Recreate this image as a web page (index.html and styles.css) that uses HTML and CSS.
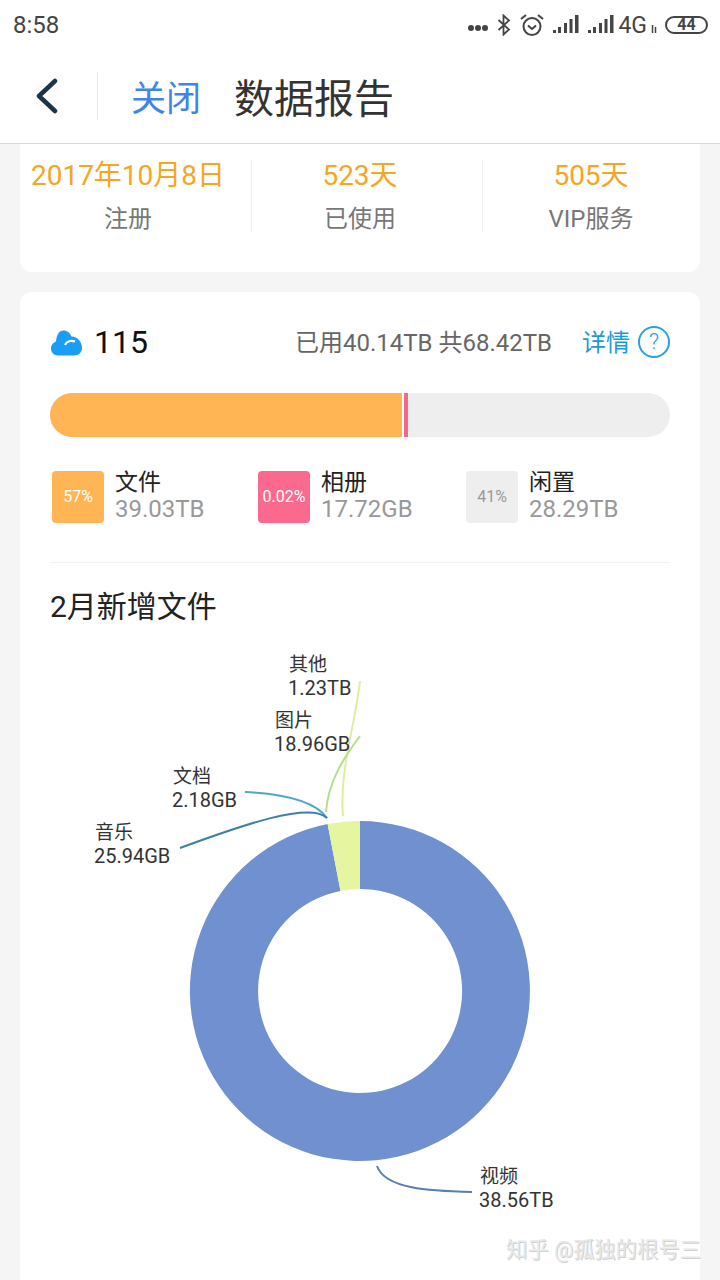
FILE: index.html
```html
<!DOCTYPE html>
<html lang="zh-CN">
<head>
    <meta charset="UTF-8">
    <meta name="viewport" content="width=device-width, initial-scale=1.0">
    <title>数据报告</title>
    <link rel="stylesheet" href="styles.css">
</head>
<body>

    <div class="status-bar">
        <span class="status-time">8:58</span>
        <div class="status-icons">
            <svg class="icon-dots" width="22" height="8" viewBox="0 0 22 8"><circle cx="4" cy="4" r="3"/><circle cx="11" cy="4" r="3"/><circle cx="18" cy="4" r="3"/></svg>
            <svg class="icon-bt" width="14" height="22" viewBox="0 0 14 22"><path d="M1.5 6 L12 15.500 L6.500 20.500 V1.500 L12 6.500 L1.500 16"/></svg>
            <svg class="icon-alarm" width="26" height="24" viewBox="0 0 26 24"><circle cx="13" cy="13.500" r="8.500"/><path d="M9 12.500 L13 16 L17 12.500"/><path d="M2 6 L7 2"/><path d="M24 6 L19 2"/></svg>
            <svg class="icon-signal" width="26" height="20" viewBox="0 0 26 20"><rect x="0" y="15" width="3" height="3"/><rect x="5" y="12" width="3" height="6"/><rect x="11" y="8" width="3" height="10"/><rect x="16.500" y="4" width="3" height="14"/><rect x="22" y="0" width="3.500" height="18"/></svg>
            <svg class="icon-signal" width="26" height="20" viewBox="0 0 26 20"><rect x="0" y="15" width="3" height="3"/><rect x="5" y="12" width="3" height="6"/><rect x="11" y="8" width="3" height="10"/><rect x="16.500" y="4" width="3" height="14"/><rect x="22" y="0" width="3.500" height="18"/></svg>
            <span class="net-type">4G</span>
            <svg class="icon-arrows" width="6" height="8" viewBox="0 0 6 8"><path d="M1.500 0 V8 M4.500 2 V8"/></svg>
            <span class="battery">44</span>
        </div>
    </div>

    <header class="nav-bar">
        <svg class="nav-back" width="24" height="36" viewBox="0 0 24 36"><path d="M20 3 L4 18 L20 33"/></svg>
        <span class="nav-line"></span>
        <span class="nav-close">关闭</span>
        <h1 class="nav-title">数据报告</h1>
    </header>

    <section class="card card-stats">
        <div class="stat">
            <div class="stat-value">2017年10月8日</div>
            <div class="stat-label">注册</div>
        </div>
        <div class="stat">
            <div class="stat-value">523天</div>
            <div class="stat-label">已使用</div>
        </div>
        <div class="stat">
            <div class="stat-value">505天</div>
            <div class="stat-label">VIP服务</div>
        </div>
    </section>

    <section class="card card-main">
        <div class="usage-head">
            <svg class="cloud" width="31" height="26" viewBox="0 0 31 26"><path d="M7 25.500 C3 25.500 0 22.500 0 18.500 C0 15 2.500 12.500 5 11.500 C5.500 5 8 0.500 12.500 0.500 C16.500 0.500 19 3 20.500 6.500 C26.500 6.500 31 12 31 18 C31 22.500 27.500 25.500 23.500 25.500 Z" fill="#1a9df5"/><path d="M14 15 C15.500 11.500 19.500 10 24 11.500" fill="none" stroke="#fff" stroke-width="2.200"/></svg>
            <span class="usage-name">115</span>
            <span class="usage-total">已用40.14TB 共68.42TB</span>
            <span class="usage-link">详情</span>
            <span class="usage-help">?</span>
        </div>

        <div class="bar">
            <div class="bar-files"></div>
            <div class="bar-photos"></div>
        </div>

        <div class="legend">
            <div class="legend-item">
                <div class="legend-box box-files">57%</div>
                <div class="legend-text">
                    <div class="legend-name">文件</div>
                    <div class="legend-size">39.03TB</div>
                </div>
            </div>
            <div class="legend-item">
                <div class="legend-box box-photos">0.02%</div>
                <div class="legend-text">
                    <div class="legend-name">相册</div>
                    <div class="legend-size">17.72GB</div>
                </div>
            </div>
            <div class="legend-item">
                <div class="legend-box box-free">41%</div>
                <div class="legend-text">
                    <div class="legend-name">闲置</div>
                    <div class="legend-size">28.29TB</div>
                </div>
            </div>
        </div>

        <h2 class="chart-title">2月新增文件</h2>

        <!-- viewBox uses page coordinates -->
        <svg class="chart" width="680" height="620" viewBox="20 640 680 620">
            <path d="M360 820 A170 170 0 1 1 327.600 823.100 L340.500 889.900 A102 102 0 1 0 360 888 Z" fill="#7090d0"/>
            <path d="M327.600 823.100 A170 170 0 0 1 360 820 L360 888 A102 102 0 0 0 340.500 889.900 Z" fill="#e6f5a0"/>

            <path class="lead" d="M360 680 C355 725 339 770 343 815" stroke="#dcef9f"/>
            <path class="lead" d="M360 735 C345 755 328 780 326 811" stroke="#b6dc8c"/>
            <path class="lead" d="M245 791 C285 793 315 800 327 817" stroke="#4fa8bf"/>
            <path class="lead" d="M180 847 C240 825 310 800 327 817" stroke="#3f80a8"/>
            <path class="lead" d="M377 1165 C385 1188 430 1190 472 1191" stroke="#5a7db5"/>

            <text class="chart-text" x="289" y="670">其他</text>
            <text class="chart-size" x="288" y="694">1.23TB</text>
            <text class="chart-text" x="275" y="726">图片</text>
            <text class="chart-size" x="274" y="750">18.96GB</text>
            <text class="chart-text" x="173" y="782">文档</text>
            <text class="chart-size" x="172" y="806">2.18GB</text>
            <text class="chart-text" x="95" y="838">音乐</text>
            <text class="chart-size" x="94" y="862">25.94GB</text>
            <text class="chart-text" x="480" y="1182">视频</text>
            <text class="chart-size" x="479" y="1206">38.56TB</text>
        </svg>
    </section>

    <div class="watermark">知乎 @孤独的根号三</div>

</body>
</html>
```

FILE: styles.css
```css
html, body {
    height: 1280px;
    overflow: hidden;
}

body {
    position: relative;
    margin: 0;
    background-color: #f5f5f5;
    font-family: 'Roboto', 'Noto Sans CJK SC', sans-serif;
    color: #333;
}

.status-bar {
    display: flex;
    justify-content: space-between;
    align-items: center;
    height: 50px;
    padding: 0 12px 0 13px;
    background-color: #fff;
}

.status-time {
    font-size: 24px;
    color: #444;
}

.status-icons {
    display: flex;
    align-items: center;
}

.icon-dots {
    fill: #444;
    margin: 6px 0 0 0;
}

.icon-bt {
    fill: none;
    stroke: #444;
    stroke-width: 1.8;
    margin-left: 8px;
}

.icon-alarm {
    fill: none;
    stroke: #444;
    stroke-width: 2;
    margin: 0 -1px 0 8px;
}

.icon-signal {
    fill: #444;
    margin-left: 9px;
}

.net-type {
    margin-left: 4px;
    font-size: 23px;
    color: #444;
}

.icon-arrows {
    fill: none;
    stroke: #444;
    stroke-width: 1.5;
    margin: 8px 0 0 4px;
}

.battery {
    box-sizing: border-box;
    width: 43px;
    height: 18px;
    margin-left: 8px;
    border: 2px solid #444;
    border-radius: 9px;
    font-size: 16px;
    font-weight: 700;
    line-height: 14px;
    text-align: center;
    color: #444;
}

.nav-bar {
    display: flex;
    align-items: center;
    box-sizing: border-box;
    height: 94px;
    padding: 0 0 2px 35px;
    background-color: #fff;
    border-bottom: 1px solid #d9d9d9;
}

.nav-back {
    fill: none;
    stroke: #1f3347;
    stroke-width: 4.5;
    stroke-linecap: round;
    stroke-linejoin: round;
}

.nav-line {
    width: 1px;
    height: 48px;
    margin-left: 38px;
    background-color: #e8e8e8;
}

.nav-close {
    margin-left: 33px;
    font-size: 35px;
    color: #3d85e8;
}

.nav-title {
    margin: 0 0 0 33px;
    font-size: 40px;
    font-weight: 400;
    color: #333;
}

.card {
    margin: 0 20px;
    background-color: #fff;
}

.card-stats {
    display: grid;
    grid-template-columns: repeat(3, 232px);
    height: 128px;
    margin-bottom: 20px;
    padding: 12px 0 0 0;
    box-sizing: border-box;
    border-radius: 0 0 12px 12px;
}

.stat {
    position: relative;
    width: 232px;
    height: 76px;
    margin-left: -8px;
    text-align: center;
}

.stat:last-child {
    margin-left: -9px;
}

.stat + .stat::before {
    content: "";
    position: absolute;
    left: 7px;
    top: 4px;
    bottom: 0;
    width: 1px;
    background-color: #f0f0f0;
}

.stat-value {
    font-size: 28px;
    line-height: 40px;
    color: #f5a623;
}

.stat-label {
    margin-top: 3px;
    font-size: 24px;
    line-height: 40px;
    color: #777;
}

.card-main {
    height: 1000px;
    padding: 30px 30px 0 30px;
    box-sizing: border-box;
    border-radius: 12px 12px 0 0;
}

.usage-head {
    display: flex;
    align-items: center;
    height: 40px;
}

.cloud {
    margin: 2px 0 0 1px;
}

.usage-name {
    margin-left: 12px;
    font-size: 32px;
    color: #111;
}

.usage-total {
    margin: 0 0 4px auto;
    font-size: 24px;
    color: #666;
}

.usage-link {
    margin: 0 0 4px 30px;
    font-size: 24px;
    color: #1c9ad6;
}

.usage-help {
    box-sizing: border-box;
    width: 32px;
    height: 32px;
    margin-left: 8px;
    border: 2px solid #2aa0dc;
    border-radius: 50%;
    font-size: 22px;
    font-weight: 300;
    line-height: 28px;
    text-align: center;
    color: #2aa0dc;
}

.bar {
    display: flex;
    height: 44px;
    margin-top: 31px;
    background-color: #eee;
    border-radius: 22px;
    overflow: hidden;
}

.bar-files {
    width: 352px;
    background-color: #ffb554;
    border-right: 2px solid #fff;
}

.bar-photos {
    width: 4px;
    background-color: #f5688c;
}

.legend {
    display: grid;
    grid-template-columns: 206px 208px 1fr;
    margin-top: 34px;
    padding: 0 0 39px 2px;
    border-bottom: 1px solid #f2f2f2;
}

.legend-item {
    display: flex;
}

.legend-box {
    width: 52px;
    height: 52px;
    margin-right: 11px;
    border-radius: 4px;
    font-size: 16px;
    line-height: 52px;
    text-align: center;
    color: #fff;
}

.box-files {
    background-color: #ffb554;
}

.box-photos {
    background-color: #fb6a8e;
}

.box-free {
    background-color: #eee;
    color: #999;
}

.legend-text {
    margin-top: -1px;
}

.legend-name {
    font-size: 23px;
    line-height: 26px;
    color: #222;
}

.legend-size {
    font-size: 24px;
    line-height: 26px;
    color: #999;
}

.chart-title {
    margin: 24px 0 0 0;
    font-size: 30px;
    font-weight: 400;
    line-height: 40px;
    color: #222;
}

.chart {
    display: block;
    margin: 14px 0 0 -30px;
}

.lead {
    fill: none;
    stroke-width: 2;
}

.chart-text {
    font-size: 19px;
    fill: #333;
}

.chart-size {
    font-size: 20px;
    fill: #333;
}

.watermark {
    position: absolute;
    top: 1232px;
    left: 506px;
    font-size: 21.3px;
    white-space: nowrap;
    color: #e8e8e8;
    text-shadow: 1px 1px 0 #d0d0d0;
}
```
